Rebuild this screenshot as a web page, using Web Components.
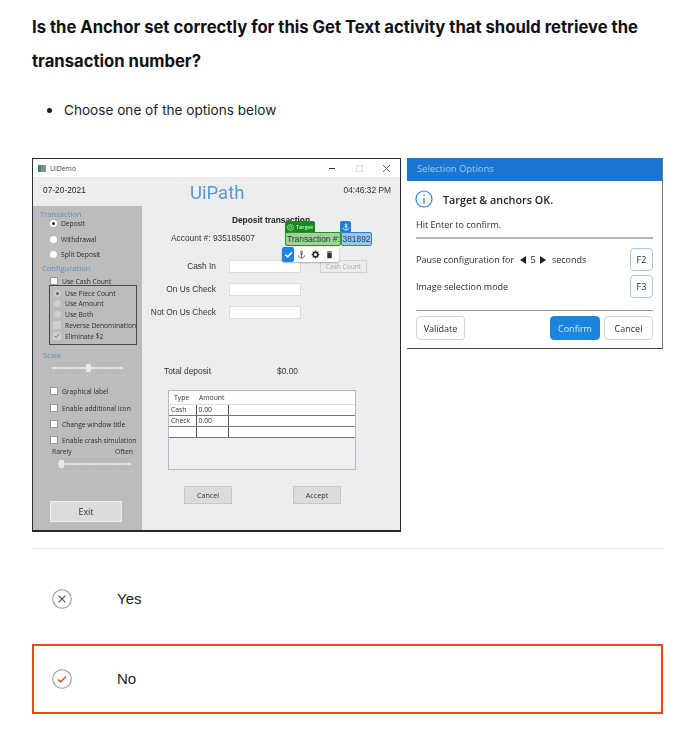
<!DOCTYPE html>
<html lang="en">
<head>
<meta charset="utf-8">
<title>Quiz question</title>
<style>
  html, body { margin: 0; background: #fff; }
  body { font-family: Inter, "Liberation Sans", sans-serif; color: #1c1d1f; }
  li::marker { font-size: 17px; }
</style>
</head>
<body>
<quiz-question>
  <span slot="title">Is the Anchor set correctly for this Get Text activity that should retrieve the transaction number?</span>
  <li slot="hint">Choose one of the options below</li>
  <demo-window slot="pictures"></demo-window>
  <selection-options slot="pictures"></selection-options>
  <quiz-option slot="options" kind="wrong">Yes</quiz-option>
  <quiz-option slot="options" kind="picked">No</quiz-option>
</quiz-question>

<script>
/* page frame */
const questionTpl = document.createElement('template');
questionTpl.innerHTML = `
  <style>
    :host { display: block; padding: 10px 33px 0 32px; }
    h1 { margin: 0; font: 700 16.65px/34px Inter, sans-serif; color: #101114; }
    ul { margin: 19px 0 0; padding: 0 0 0 32px; height: 25px; font: 400 13.6px/24px Inter, sans-serif; }
    .pictures { display: flex; align-items: flex-start; gap: 6px; margin-top: 36px; }
    hr { margin: 16px 0 15px; border: 0; border-top: 1px solid #e6e6e6; }
    .options { display: flex; flex-direction: column; gap: 10px; }
  </style>
  <h1><slot name="title"></slot></h1>
  <ul><slot name="hint"></slot></ul>
  <div class="pictures"><slot name="pictures"></slot></div>
  <hr>
  <div class="options"><slot name="options"></slot></div>
`;
class QuizQuestion extends HTMLElement {
  constructor() {
    super();
    this.attachShadow({mode: 'open'});
    this.shadowRoot.appendChild(questionTpl.content.cloneNode(true));
  }
}
customElements.define('quiz-question', QuizQuestion);

/* answer row */
const optionTpl = document.createElement('template');
optionTpl.innerHTML = `
  <style>
    :host { display: flex; align-items: center; height: 70px; box-sizing: border-box; padding: 0 0 2px 18px; gap: 45px;
            border: 2px solid transparent; font: 400 15px "Liberation Sans", Arial, sans-serif; color: #1c1d1f; }
    :host([kind="picked"]) { border-color: #f2451c; }
    svg { width: 20px; height: 20px; flex: none; position: relative; top: 1px; }
  </style>
  <svg viewBox="0 0 20 20" fill="none"></svg>
  <slot></slot>
`;
class QuizOption extends HTMLElement {
  constructor() {
    super();
    this.attachShadow({mode: 'open'});
    this.shadowRoot.appendChild(optionTpl.content.cloneNode(true));
    const mark = this.getAttribute('kind') === 'picked'
      ? '<path d="M6 10.4l2.6 2.4L14 7.8" stroke="#f2451c" stroke-width="1.5"/>'
      : '<path d="M6.6 6.6l6.8 6.8M13.4 6.6l-6.8 6.8" stroke="#4a4f57" stroke-width="1.1"/>';
    this.shadowRoot.querySelector('svg').innerHTML =
      '<circle cx="10" cy="10" r="9.3" stroke="#9a9a9a" stroke-width="1.1"/>' + mark;
  }
}
customElements.define('quiz-option', QuizOption);

/* radio / check rows of the pictured app */
const rowTpl = document.createElement('template');
rowTpl.innerHTML = `
  <style>
    :host { display: flex; align-items: center; height: 10px; white-space: nowrap; font: 6.7px "Open Sans", sans-serif; color: #2a2a2a; }
    i { flex: none; box-sizing: border-box; display: block; background: #fff; margin-right: var(--gap, 4px); position: relative; }
    :host([type="radio"]) i { width: 7px; height: 7px; border-radius: 50%; }
    :host([type="check"]) i { width: 8px; height: 8px; border: 1px solid #999; }
    :host([on][type="radio"]) i::after { content: ""; position: absolute; inset: 2px; border-radius: 50%; background: #222; }
    :host([dim]) i { background: #cfcfcf; border-color: #cfcfcf; }
    :host([dim][on][type="radio"]) i::after { background: #666; }
    svg { position: absolute; inset: 0; width: 100%; height: 100%; }
  </style>
  <i></i><slot></slot>
`;
class DemoRow extends HTMLElement {
  constructor() {
    super();
    this.attachShadow({mode: 'open'});
    this.shadowRoot.appendChild(rowTpl.content.cloneNode(true));
    if (this.getAttribute('type') === 'check' && this.hasAttribute('on')) {
      this.shadowRoot.querySelector('i').innerHTML =
        '<svg viewBox="0 0 8 8" fill="none"><path d="M1 4l2 2 4-5" stroke="#555" stroke-width="1"/></svg>';
    }
  }
}
customElements.define('demo-row', DemoRow);

/* slider with ticks */
const sliderTpl = document.createElement('template');
sliderTpl.innerHTML = `
  <style>
    :host { display: block; position: relative; height: 16px; }
    .track { position: absolute; left: 0; right: 0; top: 4px; height: 2px; background: #e2e2e2; }
    .thumb { position: absolute; top: 1px; width: 5px; height: 8px; background: #e8e8e8; border-radius: 1px; left: var(--at, 0); }
    .ticks { position: absolute; left: 0; right: 0; top: 12px; display: flex; justify-content: space-between; }
    .ticks b { width: 1px; height: 2px; background: #d2d2d2; }
  </style>
  <div class="track"></div><div class="thumb"></div>
  <div class="ticks"><b></b><b></b><b></b><b></b><b></b></div>
`;
class DemoSlider extends HTMLElement {
  constructor() {
    super();
    this.attachShadow({mode: 'open'});
    this.shadowRoot.appendChild(sliderTpl.content.cloneNode(true));
  }
}
customElements.define('demo-slider', DemoSlider);

/* the UiDemo window screenshot */
const windowTpl = document.createElement('template');
windowTpl.innerHTML = `
  <style>
    :host { display: block; flex: none; width: 369px; height: 374px; box-sizing: border-box; background: #ededed;
            border: 1px solid #1f2a33; border-bottom-width: 2px; border-left-color: #26323c; overflow: hidden; position: relative;
            font: 8.4px "Liberation Sans", sans-serif; color: #333; }
    .wrap { filter: blur(.4px); height: 100%; }
    .title { display: flex; align-items: center; height: 18px; background: #fff; padding: 0 9px 0 5px; font: 6.8px "Open Sans", sans-serif; color: #444; }
    .title .ico { width: 8px; height: 7px; background: #7d8f9a; border-left: 3px solid #3c8a5c; box-sizing: border-box; margin-right: 4px; }
    .title .ctl { margin-left: auto; display: flex; gap: 18px; align-items: center; }
    .title svg { width: 9px; height: 9px; display: block; }
    .head { display: grid; grid-template-columns: 157px 1fr auto; align-items: center; height: 29px; padding-right: 9px; }
    .date { padding-left: 10px; color: #222; margin-bottom: 4px; }
    .logo { font: 400 18.5px Roboto, sans-serif; color: #5a97d3; margin-top: 3px; }
    .time { color: #333; margin-bottom: 4px; }
    .body { display: grid; grid-template-columns: 109px 1fr; height: 326px; }
    .side { background: #bcbcbc; padding-left: 0; }
    .side > * { margin-left: var(--x, 17px); }
    .cap { height: 10px; font: 7.6px/10px "Open Sans", sans-serif; color: #5b8fc4; white-space: nowrap; }
    .box { box-sizing: border-box; width: 88px; height: 60px; margin-top: -1px; padding: 2px 0 0; border: 1px solid #4a4a4a; }
    .box demo-row { margin-left: 4px; }
    .exit { display: flex; align-items: center; justify-content: center; width: 72px; height: 21px; box-sizing: border-box; margin-top: 26px;
            background: #dcdcdc; border: 1px solid #ededed; font: 9px "Open Sans", sans-serif; color: #333; }
    .main { display: flex; flex-direction: column; }
    .main h2 { margin: 8px 0 0; height: 12px; font: 700 8.4px/12px "Liberation Sans", sans-serif; color: #222; text-align: center; }
    .acct { margin: 6px 0 0 29px; height: 12px; line-height: 12px; }
    .form { display: grid; grid-template-columns: 74px 72px 47px; column-gap: 13px; grid-auto-rows: 13px; row-gap: 10px; margin-top: 16px; align-items: center; white-space: nowrap; }
    .form label { text-align: right; padding-bottom: 2px; }
    .form .field { background: #fff; border: 1px solid #dcdcdc; height: 13px; box-sizing: border-box; }
    .form .cc { margin-left: 6px; width: 47px; height: 13px; box-sizing: border-box; border: 1px solid #d2d2d2; font: 6.6px/11px "Open Sans", sans-serif; color: #aaa; text-align: center; white-space: nowrap; }
    .total { display: grid; grid-template-columns: 113px auto; margin: 46px 0 0 22px; height: 12px; line-height: 12px; }
    .grid { box-sizing: border-box; width: 188px; height: 80px; margin: 13px 0 0 26px; border: 1px solid #a9bcd4; background: #f0f0f0; font: 6.8px "Open Sans", sans-serif; color: #333; }
    .grid table { width: 100%; border-collapse: collapse; table-layout: fixed; }
    .grid th { height: 13px; background: #fff; font-weight: 400; text-align: left; padding: 0 0 0 5px; border-bottom: 1px solid #ddd; }
    .grid td { height: 10px; background: #fff; padding: 0 0 0 2px; border-bottom: 1px solid #777; line-height: 10px; }
    .grid td.l { border-right: 1px solid #555; }
    .btns { display: flex; gap: 61px; margin: 16px 0 0 42px; }
    .btns span { width: 48px; height: 18px; box-sizing: border-box; background: #dcdcdc; border: 1px solid #c6c6c6; display: flex; align-items: center; justify-content: center; font: 7.2px "Open Sans", sans-serif; color: #333; }
    .over { position: absolute; font: 600 6px "Open Sans", sans-serif; box-sizing: border-box; }
    .t-tag { left: 252px; top: 62px; width: 30px; height: 12px; background: #128c1a; color: #cfe9cf; display: flex; align-items: center; gap: 2px; padding-left: 2px; border-radius: 2px 2px 0 0; font-size: 5.5px; }
    .t-tag svg { width: 7px; height: 7px; }
    .t-box { left: 252px; top: 73px; width: 56px; height: 14px; background: #a6cf9e; border: 1px solid #1e9a22; border-radius: 2px; color: #2d3b2d; font: 8.4px/12px "Liberation Sans", sans-serif; white-space: nowrap; padding-left: 1px; }
    .a-tag { left: 307px; top: 62px; width: 11px; height: 12px; background: #1f7fdf; border-radius: 2px 2px 0 0; display: flex; align-items: center; justify-content: center; }
    .a-tag svg { width: 8px; height: 8px; }
    .a-box { left: 308px; top: 73px; width: 31px; height: 14px; background: #9dc5ef; border: 1px solid #2b7fe3; border-radius: 2px; color: #2c4057; font: 8.4px/12px "Liberation Sans", sans-serif; text-align: center; }
    .tools { left: 249px; top: 88px; width: 57px; height: 15px; background: #fff; border-radius: 2px; box-shadow: 0 1px 2px rgba(0,0,0,.3); display: flex; }
    .tools span { width: 14px; display: flex; align-items: center; justify-content: center; }
    .tools span:first-child { background: #1a84e6; border-radius: 2px; width: 12px; }
    .tools svg { width: 9px; height: 9px; }
  </style>
  <div class="wrap">
    <div class="title"><span class="ico"></span>UIDemo
      <span class="ctl">
        <svg viewBox="0 0 9 9"><path d="M1 4.5h6" stroke="#333"/></svg>
        <svg viewBox="0 0 9 9"><rect x="1.5" y="1.5" width="6" height="6" fill="none" stroke="#ddd"/></svg>
        <svg viewBox="0 0 9 9"><path d="M1 1l7 7M8 1l-7 7" stroke="#444" stroke-width=".8"/></svg>
      </span>
    </div>
    <div class="head"><span class="date">07-20-2021</span><span class="logo">UiPath</span><span class="time">04:46:32 PM</span></div>
    <div class="body">
      <div class="side">
        <div class="cap" style="--x:7px;margin-top:3px">Transaction</div>
        <demo-row type="radio" on style="--x:17px;margin-top:-1px">Deposit</demo-row>
        <demo-row type="radio" style="margin-top:6px">Withdrawal</demo-row>
        <demo-row type="radio" style="margin-top:5px">Split Deposit</demo-row>
        <div class="cap" style="--x:9px;margin-top:4px">Configuration</div>
        <demo-row type="check" style="margin-top:3px">Use Cash Count</demo-row>
        <div class="box" style="--x:16px">
          <demo-row type="radio" dim on>Use Piece Count</demo-row>
          <demo-row type="radio" dim>Use Amount</demo-row>
          <demo-row type="radio" dim style="margin-top:1px">Use Both</demo-row>
          <demo-row type="check" dim style="margin:1px 0 0 3px">Reverse Denomination</demo-row>
          <demo-row type="check" dim on style="margin:1px 0 0 3px">Eliminate $2</demo-row>
        </div>
        <div class="cap" style="--x:10px;margin-top:5px">Scale</div>
        <demo-slider style="--x:19px;margin-top:3px;width:71px;--at:34px"></demo-slider>
        <demo-row type="check" style="margin-top:7px">Graphical label</demo-row>
        <demo-row type="check" style="margin-top:7px">Enable additional icon</demo-row>
        <demo-row type="check" style="margin-top:6px">Change window title</demo-row>
        <demo-row type="check" style="margin-top:6px">Enable crash simulation</demo-row>
        <div class="cap" style="--x:19px;margin-top:2px;width:81px;display:flex;justify-content:space-between;font-size:6.8px;color:#333"><span>Rarely</span><span>Often</span></div>
        <demo-slider style="--x:25px;margin-top:2px;width:73px;--at:1px"></demo-slider>
        <div class="exit">Exit</div>
      </div>
      <div class="main">
        <h2>Deposit transaction</h2>
        <div class="acct">Account #: 935185607</div>
        <div class="form">
          <label>Cash In</label><span class="field"></span><span class="cc">Cash Count</span>
          <label>On Us Check</label><span class="field"></span><span></span>
          <label>Not On Us Check</label><span class="field"></span><span></span>
        </div>
        <div class="total"><span>Total deposit</span><span>$0.00</span></div>
        <div class="grid">
          <table>
            <colgroup><col style="width:27px"><col style="width:32px"><col></colgroup>
            <tr><th>Type</th><th style="padding-left:3px">Amount</th><th></th></tr>
            <tr><td class="l">Cash</td><td class="l">0.00</td><td></td></tr>
            <tr><td class="l">Check</td><td class="l">0.00</td><td></td></tr>
            <tr><td class="l"></td><td class="l"></td><td></td></tr>
          </table>
        </div>
        <div class="btns"><span>Cancel</span><span>Accept</span></div>
      </div>
    </div>
    <div class="over t-tag"><svg viewBox="0 0 8 8" fill="none" stroke="#cfe9cf" stroke-width=".8"><circle cx="4" cy="4" r="3.4"/><circle cx="4" cy="4" r="1.4"/></svg>Target</div>
    <div class="over t-box">Transaction #:</div>
    <div class="over a-tag"><svg viewBox="0 0 10 10" fill="none" stroke="#fff" stroke-width="1"><circle cx="5" cy="2" r="1"/><path d="M5 3v6M3.4 4.5h3.2M1.5 6c.3 2 2 3 3.5 3s3.2-1 3.5-3"/></svg></div>
    <div class="over a-box">381892</div>
    <div class="over tools">
      <span><svg viewBox="0 0 10 10" fill="none" stroke="#fff" stroke-width="1.8"><path d="M1.5 5.3l2.5 2.4L8.6 2.6"/></svg></span>
      <span><svg viewBox="0 0 10 10" fill="none" stroke="#555" stroke-width="1"><circle cx="5" cy="2" r="1"/><path d="M5 3v6M3.4 4.5h3.2M1.5 6c.3 2 2 3 3.5 3s3.2-1 3.5-3"/></svg></span>
      <span><svg viewBox="0 0 10 10" fill="none" stroke="#222"><circle cx="5" cy="5" r="2.6" stroke-width="1.8"/><path d="M5 .6v1.400M5 8v1.400M.6 5H2M8 5h1.400M1.900 1.900l1 1M7.100 7.100l1 1M8.100 1.900l-1 1M2.900 7.100l-1 1" stroke-width="1.2"/></svg></span>
      <span><svg viewBox="0 0 10 10" fill="#333"><path d="M2.500 3h5v6.200h-5zM2 1.600h2l.4-.6h1.200l.4.6h2v.9H2z"/></svg></span>
    </div>
  </div>
`;
class DemoWindow extends HTMLElement {
  constructor() {
    super();
    this.attachShadow({mode: 'open'});
    this.shadowRoot.appendChild(windowTpl.content.cloneNode(true));
  }
}
customElements.define('demo-window', DemoWindow);

/* the Selection Options dialog screenshot */
const dialogTpl = document.createElement('template');
dialogTpl.innerHTML = `
  <style>
    :host { display: block; flex: none; width: 256px; height: 191px; box-sizing: border-box; background: #fff; border-bottom: 1px solid #444; border-right: 1px solid #777;
            font: 9px "Open Sans", sans-serif; color: #2b2b2b; }
    .wrap { filter: blur(.3px); }
    header { height: 23px; background: #1976d2; color: #9fc8ec; padding-left: 10px; line-height: 22px; font-size: 9.4px; }
    .msg { display: flex; align-items: center; gap: 10px; margin: 9px 0 0 8px; height: 18px; font-weight: 600; font-size: 10.8px; color: #222; }
    .msg svg { width: 18px; height: 18px; }
    .sub { margin: 10px 9px 0; height: 14px; line-height: 14px; }
    .rule { margin: 5px 9px 0 9px; border-top: 2px solid #b4b4b4; }
    .opt { display: flex; align-items: center; justify-content: space-between; margin: 0 9px 0 9px; height: 23px; }
    .opt span.t { display: flex; align-items: center; gap: 4px; }
    .opt svg { width: 6px; height: 8px; }
    .key { width: 23px; height: 23px; box-sizing: border-box; border: 1px solid #9ccaf0; border-radius: 4px; display: flex; align-items: center; justify-content: center; }
    .thin { margin: 12px 9px 0 9px; border-top: 1px solid #999; }
    .acts { display: flex; gap: 4px; margin: 5px 9px 0 9px; }
    .acts span { width: 49px; height: 24px; box-sizing: border-box; border: 1px solid #d4d4d4; border-radius: 4px; display: flex; align-items: center; justify-content: center; }
    .acts .go { margin-left: auto; background: #1a84e0; border-color: #1a84e0; color: #d5e9fa; width: 50px; }
  </style>
  <div class="wrap">
    <header>Selection Options</header>
    <div class="msg">
      <svg viewBox="0 0 18 18" fill="none"><circle cx="9" cy="9" r="8" stroke="#2a86e2" stroke-width="1.2"/><path d="M9 8v5.500M9 4.800v1.300" stroke="#2a86e2" stroke-width="1.2"/></svg>
      Target &amp; anchors OK.
    </div>
    <div class="sub">Hit Enter to confirm.</div>
    <div class="rule"></div>
    <div class="opt" style="margin-top:9px"><span class="t">Pause configuration for&nbsp;
      <svg viewBox="0 0 6 8"><path d="M6 0v8L0 4z" fill="#222"/></svg>5<svg viewBox="0 0 6 8"><path d="M0 0v8l6-4z" fill="#222"/></svg>&nbsp;seconds</span><span class="key">F2</span></div>
    <div class="opt" style="margin-top:4px"><span class="t">Image selection mode</span><span class="key">F3</span></div>
    <div class="thin"></div>
    <div class="acts"><span>Validate</span><span class="go">Confirm</span><span>Cancel</span></div>
  </div>
`;
class SelectionOptions extends HTMLElement {
  constructor() {
    super();
    this.attachShadow({mode: 'open'});
    this.shadowRoot.appendChild(dialogTpl.content.cloneNode(true));
  }
}
customElements.define('selection-options', SelectionOptions);
</script>
</body>
</html>
